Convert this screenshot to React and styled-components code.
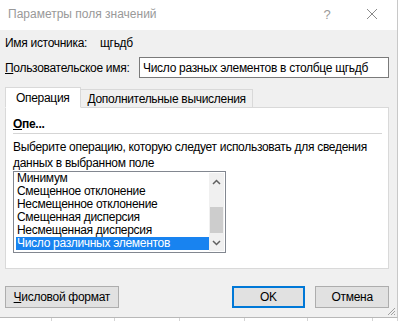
import React from "react";
import styled, { createGlobalStyle } from "styled-components";

const Global = createGlobalStyle`
  html, body { margin: 0; padding: 0; background: #ffffff; }
  body { font-family: "Liberation Sans", Arial, sans-serif; font-size: 12px; letter-spacing: -0.3px; color: #000; }
`;

const Page = styled.div`
  width: 398px;
  height: 321px;
  overflow: hidden;
  display: flex;
  flex-direction: column;
`;

const Dialog = styled.div`
  width: 397px;
  height: 317px;
  background: #f0f0f0;
  border-right: 1px solid #c8c8c8;
  border-bottom: 1px solid #b8b8b8;
  display: flex;
  flex-direction: column;
  position: relative;
`;

const TitleBar = styled.div`
  height: 30px;
  background: #ffffff;
  display: flex;
  align-items: center;
  padding-left: 8px;
  flex-shrink: 0;
`;

const Title = styled.div`
  flex: 1;
  color: #999999;
  font-size: 12px;
  letter-spacing: 0;
  line-height: 16px;
  margin-top: -2px;
`;

const TitleBtn = styled.div`
  width: ${(p) => p.$w}px;
  height: 30px;
  display: flex;
  align-items: center;
  justify-content: center;
  color: #9a9a9a;
  font-size: 13px;
  margin-top: -2px;
`;

const Body = styled.div`
  flex: 1;
  display: flex;
  flex-direction: column;
  padding: 0 8px 0 5px;
`;

const InfoRow = styled.div`
  display: flex;
  align-items: center;
  height: ${(p) => p.$h}px;
  margin-top: ${(p) => p.$mt || 0}px;
  line-height: 16px;
`;

const Label = styled.span`
  width: ${(p) => p.$w}px;
  flex-shrink: 0;
  white-space: nowrap;
`;

const U = styled.span`
  text-decoration: underline;
`;

const TextInput = styled.div`
  width: 251px;
  height: 21px;
  box-sizing: border-box;
  border: 1px solid #7a7a7a;
  background: #fff;
  display: flex;
  align-items: center;
  padding-left: 3px;
  white-space: nowrap;
`;

const Tabs = styled.div`
  display: flex;
  align-items: flex-end;
  height: 21px;
  margin-top: 8px;
  position: relative;
  z-index: 1;
`;

const Tab = styled.div`
  height: ${(p) => (p.$active ? 21 : 18)}px;
  box-sizing: border-box;
  padding: 0 ${(p) => (p.$active ? 10 : 6)}px 0 ${(p) => (p.$active ? 10 : 7)}px;
  border: 1px solid #d9d9d9;
  border-bottom: ${(p) => (p.$active ? "1px solid #ffffff" : "none")};
  border-left: ${(p) => (p.$active ? "1px solid #d9d9d9" : "none")};
  background: ${(p) => (p.$active ? "#ffffff" : "#f0f0f0")};
  display: flex;
  align-items: center;
  margin-bottom: ${(p) => (p.$active ? -1 : 0)}px;
  white-space: nowrap;
  line-height: 16px;
`;

const Panel = styled.div`
  width: 384px;
  height: 162px;
  box-sizing: border-box;
  border: 1px solid #d9d9d9;
  background: #ffffff;
  padding: 8px 6px 0 7px;
  display: flex;
  flex-direction: column;
`;

const Heading = styled.div`
  font-weight: 700;
  line-height: 16px;
  height: 16px;
  white-space: nowrap;
`;

const Separator = styled.div`
  height: 1px;
  background: #d5d5d5;
  margin-top: 1px;
  width: 369px;
`;

const Desc = styled.div`
  margin-top: 5px;
  line-height: 16px;
  white-space: nowrap;
`;

const ListBox = styled.div`
  margin-top: 0px;
  width: 213px;
  height: 82px;
  box-sizing: border-box;
  border: 1px solid #828790;
  background: #fff;
  display: flex;
  padding: 1px 2px 1px 2px;
`;

const Items = styled.div`
  flex: 1;
  display: flex;
  flex-direction: column;
  justify-content: flex-end;
  padding-bottom: 1px;
`;

const Item = styled.div`
  height: 13px;
  line-height: 13px;
  padding-left: 1px;
  white-space: nowrap;
  background: ${(p) => (p.$sel ? "#1883f0" : "transparent")};
  color: ${(p) => (p.$sel ? "#ffffff" : "#000000")};
`;

const ScrollBar = styled.div`
  width: 15px;
  margin: 0 -1px 0 0;
  background: #f0f0f0;
  display: flex;
  flex-direction: column;
`;

const Arrow = styled.div`
  height: 17px;
  display: flex;
  align-items: center;
  justify-content: center;
`;

const Track = styled.div`
  flex: 1;
  display: flex;
  flex-direction: column;
  justify-content: flex-end;
  padding: 0 1px;
`;

const Thumb = styled.div`
  height: 26px;
  background: #cdcdcd;
  margin-bottom: 1px;
`;

const Footer = styled.div`
  display: flex;
  align-items: center;
  margin-top: 17px;
`;

const Button = styled.div`
  width: ${(p) => p.$w}px;
  height: 22px;
  box-sizing: border-box;
  border: ${(p) => (p.$primary ? "2px solid #0078d7" : "1px solid #adadad")};
  background: #e1e1e1;
  display: flex;
  align-items: center;
  justify-content: center;
  margin-left: ${(p) => p.$ml || 0}px;
  white-space: nowrap;
  line-height: 16px;
`;

const Grip = styled.svg`
  position: absolute;
  right: 1px;
  bottom: 1px;
`;

const Sheet = styled.div`
  flex: 1;
  background: #fff;
  display: grid;
  grid-template-columns: 52px 63px 65px 65px 63px 65px 25px;
`;

const Cell = styled.div`
  border-right: 1px solid #d4d4d4;
`;

const items = [
  "Минимум",
  "Смещенное отклонение",
  "Несмещенное отклонение",
  "Смещенная дисперсия",
  "Несмещенная дисперсия",
  "Число различных элементов",
];

export default function App() {
  return (
    <Page>
      <Global />
      <Dialog>
        <TitleBar>
          <Title>Параметры поля значений</Title>
          <TitleBtn $w={40}>?</TitleBtn>
          <TitleBtn $w={50}>
            <svg width="12" height="12" viewBox="0 0 12 12">
              <path d="M1 1 L11 11 M11 1 L1 11" stroke="#8a8a8a" strokeWidth="1" fill="none" />
            </svg>
          </TitleBtn>
        </TitleBar>
        <Body>
          <InfoRow $h={16} $mt={5}>
            <Label $w={95}>Имя источника:</Label>
            <span>щгьдб</span>
          </InfoRow>
          <InfoRow $h={21} $mt={6}>
            <Label $w={134}>
              <U>П</U>ользовательское имя:
            </Label>
            <TextInput>Число разных элементов в столбце щгьдб</TextInput>
          </InfoRow>
          <Tabs>
            <Tab $active>Операция</Tab>
            <Tab>Дополнительные вычисления</Tab>
          </Tabs>
          <Panel>
            <Heading>
              <U>О</U>пе...
            </Heading>
            <Separator />
            <Desc>
              Выберите операцию, которую следует использовать для сведения
              <br />
              данных в выбранном поле
            </Desc>
            <ListBox>
              <Items>
                {items.map((t, i) => (
                  <Item key={t} $sel={i === items.length - 1}>
                    {t}
                  </Item>
                ))}
              </Items>
              <ScrollBar>
                <Arrow>
                  <svg width="9" height="6" viewBox="0 0 9 6">
                    <path d="M1 5 L4.5 1.5 L8 5" stroke="#606060" strokeWidth="1.5" fill="none" />
                  </svg>
                </Arrow>
                <Track>
                  <Thumb />
                </Track>
                <Arrow>
                  <svg width="9" height="6" viewBox="0 0 9 6">
                    <path d="M1 1 L4.5 4.5 L8 1" stroke="#606060" strokeWidth="1.5" fill="none" />
                  </svg>
                </Arrow>
              </ScrollBar>
            </ListBox>
          </Panel>
          <Footer>
            <Button $w={114}>
              <U>Ч</U>исловой формат
            </Button>
            <Button $w={74} $ml={113} $primary>
              OK
            </Button>
            <Button $w={74} $ml={10}>
              Отмена
            </Button>
          </Footer>
        </Body>
        <Grip width="10" height="10" viewBox="0 0 10 10">
          <path d="M9 2 L2 9 M9 5 L5 9 M9 8 L8 9" stroke="#a0a0a0" strokeWidth="1" />
        </Grip>
      </Dialog>
      <Sheet>
        {Array.from({ length: 7 }).map((_, i) => (
          <Cell key={i} />
        ))}
      </Sheet>
    </Page>
  );
}
